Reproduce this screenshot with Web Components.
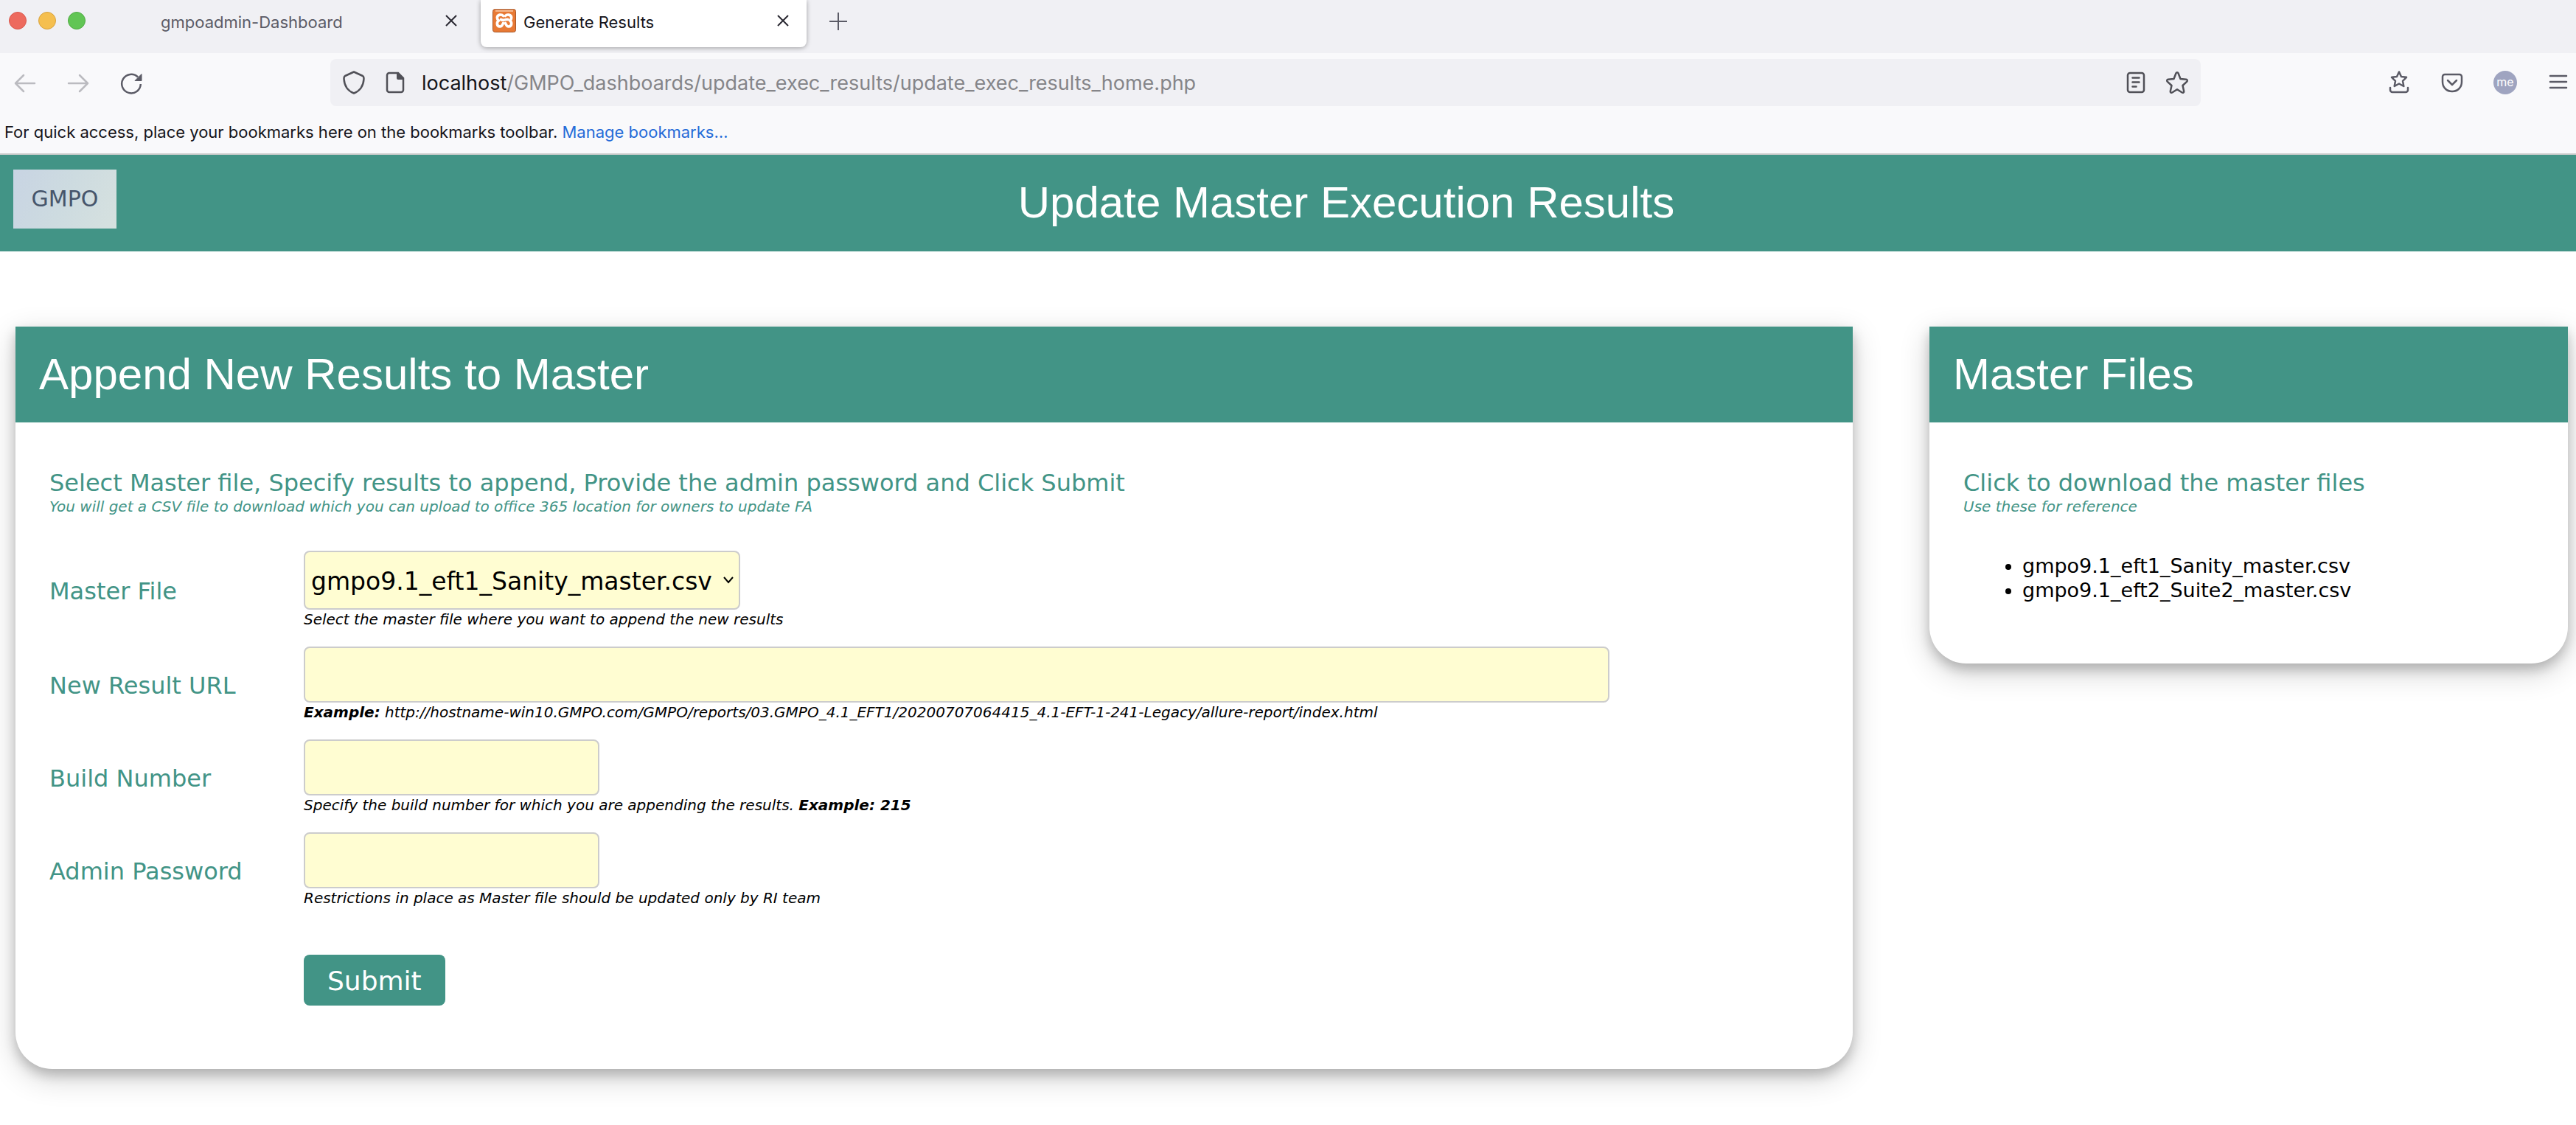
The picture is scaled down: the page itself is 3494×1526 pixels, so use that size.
<!DOCTYPE html>
<html lang="en">
<head>
<meta charset="utf-8">
<title>Generate Results</title>
<style>
  :root {
    --brand: #429486;
    --chrome-font: Inter, "Liberation Sans", sans-serif;
    --head-font: "Liberation Sans", Arial, sans-serif;
    --body-font: Verdana, "DejaVu Sans", sans-serif;
  }
  body { margin: 0; background: #fff; color: #000; font-family: var(--body-font); }
</style>
</head>
<body>
<browser-chrome>
  <browser-tab slot="tab" label="gmpoadmin-Dashboard"></browser-tab>
  <browser-tab slot="tab" label="Generate Results" active></browser-tab>
</browser-chrome>
<page-banner>Update Master Execution Results</page-banner>
<main-columns>
  <result-card heading="Append New Results to Master">
    <card-intro heading="Select Master file, Specify results to append, Provide the admin password and Click Submit">You will get a CSV file to download which you can upload to office 365 location for owners to update FA</card-intro>
    <append-form></append-form>
  </result-card>
  <result-card heading="Master Files">
    <card-intro heading="Click to download the master files">Use these for reference</card-intro>
    <file-list></file-list>
  </result-card>
</main-columns>
<script>
const define = (name, html, setup) => {
  const template = document.createElement('template');
  template.innerHTML = html;
  customElements.define(name, class extends HTMLElement {
    constructor() {
      super();
      this.attachShadow({ mode: 'open' }).append(template.content.cloneNode(true));
    }
    connectedCallback() { if (setup) setup(this, this.shadowRoot); }
  });
};

define('browser-tab', `
<style>
  :host { display: flex; align-items: center; flex: 0 1 442px; box-sizing: border-box; height: 64px; padding: 0 20px 8px 16px; color: #5b5b66; font: 22px/28px var(--chrome-font); }
  :host([active]) { background: #fff; color: #15141a; border-radius: 0 0 8px 8px; box-shadow: 0 1px 6px rgba(0,0,0,.35); }
  .icon { display: none; width: 32px; height: 32px; margin-right: 10px; }
  :host([active]) .icon { display: block; }
  .label { flex: 1; padding-top: 4px; }
  button { display: flex; padding: 2px; border: 0; background: none; color: #2b2a33; }
</style>
<svg class="icon" viewBox="0 0 32 32">
  <rect x=".5" y=".5" width="31" height="31" rx="3" fill="#e87a35" stroke="#a5562a"/>
  <path d="M4 2.500h24" stroke="#f3b184" stroke-width="3"/>
  <g fill="none" stroke="#fff" stroke-width="3.600" stroke-linecap="round" stroke-linejoin="round">
    <path d="M14.500 9.500C12.500 7 6.500 7.500 6.300 12c0 1.800.8 3 2.200 4-3 1.800-3.300 7.500 1.500 8 3.200.2 3.500-3 4.500-4.500"/>
    <path d="M17.500 9.500c2-2.500 8-2 8.200 2.500 0 1.800-.8 3-2.200 4 3 1.800 3.300 7.500-1.500 8-3.200.2-3.500-3-4.500-4.500"/>
    <path d="M11.500 14.500c3 2.500 6.500-1 9.500 0"/>
  </g>
</svg>
<span class="label"></span>
<button type="button" aria-label="Close tab"><svg width="20" height="20" viewBox="0 0 20 20" fill="none" stroke="currentColor" stroke-width="2"><path d="M3 3l14 14M17 3L3 17"/></svg></button>
`, (el, root) => { root.querySelector('.label').textContent = el.getAttribute('label'); });

define('browser-chrome', `
<style>
  :host { display: block; background: #f9f9fb; border-bottom: 2px solid #ccc; font-family: var(--chrome-font); color: #15141a; }
  .tabs { display: flex; gap: 8px; height: 72px; background: #f0f0f4; }
  .lights { display: flex; gap: 16px; padding: 16px 78px 0 12px; }
  .lights i { width: 24px; height: 24px; border-radius: 50%; box-sizing: border-box; border: 1px solid #d9574c; background: #ed6a5e; }
  .lights i:nth-child(2) { background: #f5bf4f; border-color: #d8a23e; }
  .lights i:nth-child(3) { background: #61c554; border-color: #4fab43; }
  button { display: flex; padding: 0; border: 0; background: none; color: #5b5b66; }
  .new { align-self: flex-start; margin: 16px 0 0 22px; }
  .bar { display: flex; align-items: center; padding: 8px 8px 8px 18px; }
  .nav { display: flex; gap: 40px; width: 430px; }
  .nav .off { color: #bbbbc0; }
  .url { flex: 1; display: flex; align-items: center; box-sizing: border-box; height: 64px; padding: 0 16px; border-radius: 8px; background: #f0f0f4; color: #505057; }
  .url .lead { display: flex; gap: 24px; margin-right: 20px; }
  .url .trail { display: flex; gap: 24px; margin-left: auto; }
  .addr { padding-top: 2px; font-size: 27px; line-height: 32px; color: #858589; }
  .addr b { font-weight: 400; color: #15141a; }
  .tools { display: flex; gap: 40px; margin-left: 253px; }
  .marks { padding: 12px 6px 14px; font-size: 22px; line-height: 30px; }
  .marks a { color: #246bd8; text-decoration: none; }
</style>
<div class="tabs">
  <div class="lights"><i></i><i></i><i></i></div>
  <slot name="tab"></slot>
  <button class="new" type="button" aria-label="New tab"><svg width="26" height="26" viewBox="0 0 26 26" fill="none" stroke="currentColor" stroke-width="2"><path d="M13 1v24M1 13h24"/></svg></button>
</div>
<div class="bar">
  <div class="nav">
    <button class="off" type="button" aria-label="Back"><svg width="32" height="32" viewBox="0 0 32 32" fill="none" stroke="currentColor" stroke-width="2.500" stroke-linecap="round" stroke-linejoin="round"><path d="M29 17H3M14 6L3 17l11 11"/></svg></button>
    <button class="off" type="button" aria-label="Forward"><svg width="32" height="32" viewBox="0 0 32 32" fill="none" stroke="currentColor" stroke-width="2.500" stroke-linecap="round" stroke-linejoin="round"><path d="M3 17h26M18 6l11 11-11 11"/></svg></button>
    <button type="button" aria-label="Reload"><svg width="32" height="32" viewBox="0 0 32 32"><path d="M28.800 18A12.800 12.800 0 1 1 25 8.500" fill="none" stroke="currentColor" stroke-width="2.500"/><path d="M30 4.500v9h-9z" fill="currentColor" stroke="currentColor" stroke-linejoin="round"/></svg></button>
  </div>
  <div class="url">
    <div class="lead">
      <svg width="32" height="32" viewBox="0 0 32 32" fill="none" stroke="currentColor" stroke-width="2.500" stroke-linejoin="round"><path d="M16 1.500L28 7c1.500.8 1.500 2 1.500 4C29 19 25 27 16 30.500 7 27 3 19 2.500 11c0-2 0-3.200 1.500-4z"/></svg>
      <svg width="32" height="32" viewBox="0 0 32 32"><path d="M8 3h12l7 7v16a3 3 0 0 1-3 3H8a3 3 0 0 1-3-3V6a3 3 0 0 1 3-3z" fill="none" stroke="currentColor" stroke-width="2.500"/><path d="M18 2h2l8 8v2h-8a2 2 0 0 1-2-2z" fill="currentColor"/></svg>
    </div>
    <div class="addr"><b>localhost</b>/GMPO_dashboards/update_exec_results/update_exec_results_home.php</div>
    <div class="trail">
      <svg width="32" height="32" viewBox="0 0 32 32" fill="none" stroke="currentColor" stroke-width="2.500" stroke-linecap="round"><rect x="5" y="3" width="22" height="26" rx="3"/><path d="M11.500 9.500h9M11.500 15.500h9M11.500 21.500h5"/></svg>
      <svg width="32" height="32" viewBox="0 0 32 32" fill="none" stroke="currentColor" stroke-width="2.500" stroke-linejoin="round"><path d="M14.500 3.200c.6-1.300 2.400-1.300 3 0l3 7.800 7.800.8c1.500.2 2 1.800 1 2.800l-5.800 5.400 1.700 7.700c.3 1.500-1.200 2.500-2.500 1.800L16 25.300l-6.700 4.200c-1.300.7-2.800-.3-2.500-1.800L8.500 20l-5.800-5.400c-1-1-.5-2.600 1-2.800l7.800-.8z"/></svg>
    </div>
  </div>
  <div class="tools">
    <button type="button" aria-label="Save bookmark"><svg width="32" height="32" viewBox="0 0 32 32" fill="none" stroke="currentColor" stroke-width="2.500" stroke-linejoin="round" stroke-linecap="round"><path d="M16 1.500l3 6.500 7 .8-5 5 1.300 7.200L16 17.500 9.700 21 11 13.800l-5-5L13 8z"/><path d="M4 23v3a3 3 0 0 0 3 3h18a3 3 0 0 0 3-3v-3"/></svg></button>
    <button type="button" aria-label="Pocket"><svg width="32" height="32" viewBox="0 0 32 32" fill="none" stroke="currentColor" stroke-width="2.500" stroke-linejoin="round" stroke-linecap="round"><path d="M6 5h20a3 3 0 0 1 3 3v7c0 8-6 13-13 13S3 23 3 15V8a3 3 0 0 1 3-3z"/><path d="M10 13l6 6 6-6"/></svg></button>
    <button type="button" aria-label="Account"><svg width="32" height="32" viewBox="0 0 32 32"><circle cx="16" cy="16" r="16" fill="#9fa4c0"/><text x="16" y="21" text-anchor="middle" font-family="Inter, sans-serif" font-size="16" fill="#fff">me</text></svg></button>
    <button type="button" aria-label="Menu"><svg width="32" height="32" viewBox="0 0 32 32" fill="none" stroke="currentColor" stroke-width="2.500" stroke-linecap="round"><path d="M5 7h22M5 15h22M5 23h22"/></svg></button>
  </div>
</div>
<div class="marks">For quick access, place your bookmarks here on the bookmarks toolbar. <a href="#">Manage bookmarks…</a></div>
`);

define('page-banner', `
<style>
  :host { display: flex; align-items: flex-start; padding: 20px 0 31px 18px; background: var(--brand); color: #fff; }
  .logo { display: flex; align-items: center; justify-content: center; width: 140px; height: 80px; background: linear-gradient(115deg, #c8d4e3, #cddbe0 50%, #d6e1df); color: #46556b; font: 30px/40px "DejaVu Sans", sans-serif; }
  h1 { flex: 1; margin: 0; padding-top: 10px; text-align: center; font: 60px/70px var(--head-font); }
</style>
<div class="logo">GMPO</div>
<h1><slot></slot></h1>
`);

define('main-columns', `
<style>
  :host { display: grid; grid-template-columns: 2492fr 866fr; gap: 104px; align-items: start; padding: 102px 11px 76px 21px; }
</style><slot></slot>`);

define('result-card', `
<style>
  :host { display: block; border-radius: 0 0 50px 50px; background: #fff; box-shadow: 0 8px 16px rgba(0,0,0,.2), 0 12px 40px rgba(0,0,0,.19); }
  h2 { margin: 0; padding: 30px 32px; background: var(--brand); color: #fff; font: 60px/70px var(--head-font); }
  .body { padding: 62px 46px 83px; }
</style>
<h2></h2><div class="body"><slot></slot></div>
`, (el, root) => { root.querySelector('h2').textContent = el.getAttribute('heading'); });

define('card-intro', `
<style>
  :host { display: block; color: var(--brand); }
  h3 { margin: 0; font-weight: 400; font-size: 32px; line-height: 40px; }
  p { margin: 0; font-style: italic; font-size: 20px; line-height: 24px; }
</style>
<h3></h3><p><slot></slot></p>
`, (el, root) => { root.querySelector('h3').textContent = el.getAttribute('heading'); });

define('append-form', `
<style>
  :host { display: block; padding: 48px 0 3px; }
  form { display: grid; gap: 24px; }
  .row { display: grid; grid-template-columns: 345px 1fr; align-items: center; }
  label { padding-top: 4px; color: var(--brand); font-size: 32px; line-height: 40px; }
  input, select { display: block; box-sizing: border-box; height: 76px; width: 401px; border: 2px solid #ccc; border-radius: 8px; background: #fffdd2; color: #000; font: 33px/40px var(--body-font); padding: 0 8px; }
  .wide { width: calc(100% - 284px); }
  .pick { display: grid; justify-content: start; align-items: center; }
  .pick > * { grid-area: 1 / 1; }
  select { appearance: none; width: auto; height: 80px; padding: 3px 36px 0 8px; }
  .pick svg { justify-self: end; margin-right: 8px; pointer-events: none; }
  p { margin: 0; font-style: italic; font-size: 20px; line-height: 26px; }
  .submit { padding-top: 40px; }
  button { grid-column: 2; justify-self: start; height: 69px; padding: 2px 32px 0; border: 0; border-radius: 8px; background: var(--brand); color: #fff; font: 36px/44px var(--body-font); }
</style>
<form>
  <div class="row"><label for="master">Master File</label><div>
    <div class="pick"><select id="master"><option>gmpo9.1_eft1_Sanity_master.csv</option></select>
    <svg width="16" height="10" viewBox="0 0 16 10" fill="none" stroke="#000" stroke-width="2"><path d="M2 1l6 7 6-7"/></svg></div>
    <p>Select the master file where you want to append the new results</p></div></div>
  <div class="row"><label for="url">New Result URL</label><div><input class="wide" id="url" type="text">
    <p><b>Example:</b> http://hostname-win10.GMPO.com/GMPO/reports/03.GMPO_4.1_EFT1/20200707064415_4.1-EFT-1-241-Legacy/allure-report/index.html</p></div></div>
  <div class="row"><label for="build">Build Number</label><div><input id="build" type="text">
    <p>Specify the build number for which you are appending the results. <b>Example: 215</b></p></div></div>
  <div class="row"><label for="password">Admin Password</label><div><input id="password" type="password">
    <p>Restrictions in place as Master file should be updated only by RI team</p></div></div>
  <div class="row submit"><button type="button">Submit</button></div>
</form>
`);

define('file-list', `
<style>
  :host { display: block; padding: 52px 0 0; }
  ul { margin: 0; padding-left: 80px; font-size: 27px; line-height: 33px; }
  a { color: inherit; text-decoration: none; }
</style>
<ul><li><a href="#">gmpo9.1_eft1_Sanity_master.csv</a></li><li><a href="#">gmpo9.1_eft2_Suite2_master.csv</a></li></ul>
`);
</script>
</body>
</html>
